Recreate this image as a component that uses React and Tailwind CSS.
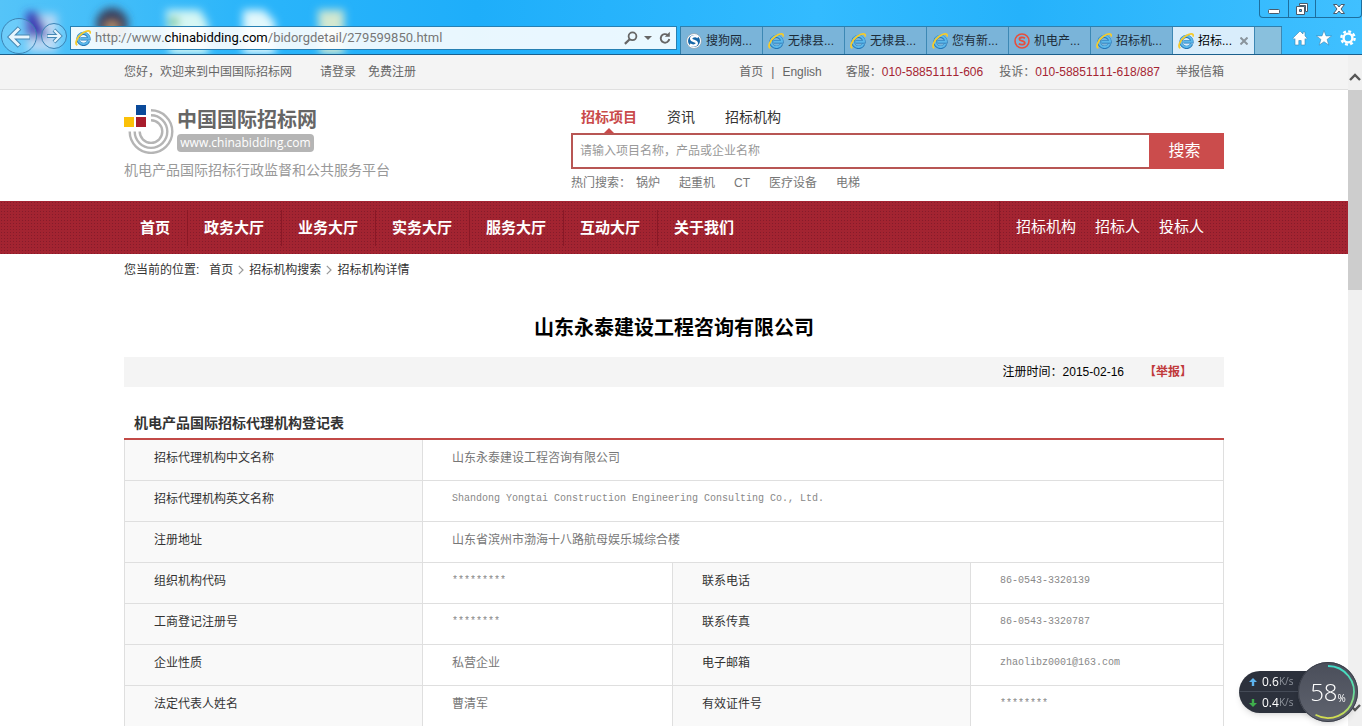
import { useState } from "react";

const tabs = [
  { icon: "sogou", label: "搜狗网..." },
  { icon: "ie", label: "无棣县..." },
  { icon: "ie", label: "无棣县..." },
  { icon: "ie", label: "您有新..." },
  { icon: "sohu", label: "机电产..." },
  { icon: "ie", label: "招标机..." },
];

const navItems = ["首页", "政务大厅", "业务大厅", "实务大厅", "服务大厅", "互动大厅", "关于我们"];
const navLinks = ["招标机构", "招标人", "投标人"];
const searchTabs = ["招标项目", "资讯", "招标机构"];
const hotWords = ["锅炉", "起重机", "CT", "医疗设备", "电梯"];

const wideRows = [
  { label: "招标代理机构中文名称", value: "山东永泰建设工程咨询有限公司" },
  { label: "招标代理机构英文名称", value: "Shandong Yongtai Construction Engineering Consulting Co., Ltd.", mono: true },
  { label: "注册地址", value: "山东省滨州市渤海十八路航母娱乐城综合楼" },
];

const pairRows = [
  [{ label: "组织机构代码", value: "*********", mono: true }, { label: "联系电话", value: "86-0543-3320139", mono: true }],
  [{ label: "工商登记注册号", value: "********", mono: true }, { label: "联系传真", value: "86-0543-3320787", mono: true }],
  [{ label: "企业性质", value: "私营企业" }, { label: "电子邮箱", value: "zhaolibz0001@163.com", mono: true }],
  [{ label: "法定代表人姓名", value: "曹清军" }, { label: "有效证件号", value: "********", mono: true }],
];

const IeIcon = () => (
  <svg viewBox="0 0 16 16" className="size-4 shrink-0" fill="none">
    <path d="M13.6 11A5.500 5.500 0 1 1 14 8.800H5.400" stroke="#2377b8" strokeWidth="3.200" />
    <path d="M13.4 11A5.500 5.500 0 1 1 14 8.800H5.400" stroke="#5cb8ea" strokeWidth="2" />
    <path d="M2.300 15.200C-1 13.400 2.600 6.600 7.400 3.300 11.400.5 15.800-.4 15.200 3.600" stroke="#f5cb2c" strokeWidth="1.800" />
  </svg>
);

const SogouIcon = () => (
  <svg viewBox="0 0 16 16" className="size-4 shrink-0" fill="none">
    <circle cx="8" cy="8" r="7.500" fill="#fff" stroke="#8aa0b0" strokeWidth=".8" />
    <circle cx="8" cy="8" r="6" fill="#1667a8" />
    <path d="M12 4.200C9.500 2.200 4.800 3.400 5.200 6 5.500 8.400 10.600 7.600 10.800 9.900 11 12.600 6.800 13.400 3.800 11.600" stroke="#fff" strokeWidth="2.400" />
  </svg>
);

const SohuIcon = () => (
  <svg viewBox="0 0 16 16" className="size-4 shrink-0" fill="none">
    <circle cx="8" cy="8" r="7" stroke="#e84e3c" strokeWidth="1.6" />
    <path d="M11 5.200C9 4 5.400 4.200 5.400 6.200 5.400 8.400 10.800 7.500 10.800 9.900 10.800 12 7 12 4.800 10.800" stroke="#e84e3c" strokeWidth="1.8" />
  </svg>
);

const TabIcon = ({ type }) => {
  if (type === "sogou") return <SogouIcon />;
  if (type === "sohu") return <SohuIcon />;
  return <IeIcon />;
};

// Desktop shortcuts seen through the glass title bar
const GlassBackground = () => (
  <svg className="absolute inset-0 size-full" aria-hidden="true">
    <defs>
      <filter id="soft" x="-50%" y="-50%" width="200%" height="200%">
        <feGaussianBlur stdDeviation="4" />
      </filter>
      <linearGradient id="sky" x1="0" x2="1">
        <stop offset="0" stopColor="#55c4f8" />
        <stop offset=".18" stopColor="#2bb5fa" />
        <stop offset=".35" stopColor="#1eaefa" />
        <stop offset=".6" stopColor="#33bbff" />
        <stop offset=".75" stopColor="#25b2fb" />
        <stop offset="1" stopColor="#40c0ff" />
      </linearGradient>
    </defs>
    <rect width="100%" height="100%" fill="url(#sky)" />
    <g filter="url(#soft)">
      <path d="M28 14H57V52H28Z" fill="#b9d9f5" />
      <path d="M26 12H37L50 38H27Z" fill="#3f3cb4" />
      <circle cx="112" cy="24" r="16" fill="#3b3f5c" />
      <ellipse cx="112" cy="27" rx="7" ry="5" fill="#c49a6a" />
      <path d="M166 10H200L208 24V54H170Z" fill="#d6f7f4" />
      <circle cx="174" cy="22" r="5" fill="#5fc08a" />
      <path d="M243 10H264L275 22V54H243Z" fill="#e2f8fc" />
      <path d="M318 10H344V54H320Z" fill="#d3e8d0" />
    </g>
  </svg>
);

const WindowButtons = () => (
  <div className="flex h-[18px] w-[103px] rounded-b border border-t-0 border-[#1d6f9f]">
    <button type="button" aria-label="最小化" className="flex w-7 items-center justify-center">
      <svg viewBox="0 0 14 14" className="size-3.5">
        <rect x="1.500" y="7.500" width="11" height="4" rx="1" fill="#fff" stroke="#4a5a6a" />
      </svg>
    </button>
    <button type="button" aria-label="还原" className="flex w-7 items-center justify-center border-x border-[#1d6f9f]">
      <svg viewBox="0 0 14 14" className="size-3.5" fill="#fff" stroke="#4a5a6a">
        <path d="M4.500 1.500h8v8h-2v-6h-6z" />
        <path fillRule="evenodd" d="M1.500 4.500h8v8h-8zM4.500 7.500h2v2h-2z" />
      </svg>
    </button>
    <button type="button" aria-label="关闭" className="flex flex-1 items-center justify-center">
      <svg viewBox="0 0 14 14" className="size-3.5">
        <path d="M1.500 2.500h3.500l2 2.500 2-2.500h3.500L9 7l3.500 4.500H9L7 9l-2 2.500H1.500L5 7z" fill="#fff" stroke="#4a5a6a" />
      </svg>
    </button>
  </div>
);

const BrowserBar = () => (
  <header className="relative h-[55px] shrink-0 border-b border-[#1b5f8c]">
    <GlassBackground />
    <div className="relative flex h-[54px] flex-col">
      <div className="flex h-[26px] items-start justify-end">
        <WindowButtons />
      </div>
      <div className="flex h-7 items-start">
        <div className="-mt-2 flex h-9 w-[70px] shrink-0 items-center">
          <button type="button" aria-label="后退" className="ml-px">
            <svg viewBox="0 0 36 36" className="size-9" fill="none">
              <circle cx="18" cy="18" r="17.500" fill="#fff" fillOpacity=".15" stroke="#3b83b4" />
              <path d="M29 19H10M18.500 10 9.500 19l9 9" stroke="#4687b3" strokeWidth="5" />
              <path d="M28.500 19H10M18 10.500 9.500 19l8.500 8.500" stroke="#e6f5fd" strokeWidth="3" />
            </svg>
          </button>
          <button type="button" aria-label="前进" className="ml-1">
            <svg viewBox="0 0 26 26" className="size-[26px]" fill="none">
              <circle cx="13" cy="13" r="12.500" fill="#fff" fillOpacity=".15" stroke="#3b83b4" />
              <path d="M6 13h13M13 7l6 6-6 6" stroke="#4687b3" strokeWidth="4" />
              <path d="M6.500 13H19M13.300 7.300 19 13l-5.700 5.700" stroke="#e6f5fd" strokeWidth="2.200" />
            </svg>
          </button>
        </div>
        <div className="flex h-6 min-w-0 flex-1 items-center border border-[#2680b3] bg-white/90 px-1">
          <IeIcon />
          <p className="ml-1 flex-1 truncate font-['Roboto',sans-serif] text-[13px] leading-5 text-[#777]">
            http://www.<span className="text-black">chinabidding.com</span>/bidorgdetail/279599850.html
          </p>
          <button type="button" aria-label="搜索">
            <svg viewBox="0 0 14 14" className="size-3.5" fill="none" stroke="#666" strokeWidth="1.800">
              <circle cx="8.500" cy="5.300" r="3.900" />
              <path d="M5.700 8.200.9 12.900" strokeWidth="2.200" />
            </svg>
          </button>
          <svg viewBox="0 0 8 4" className="ml-1.5 h-1 w-2">
            <path d="M0 0h8L4 4z" fill="#666" />
          </svg>
          <button type="button" aria-label="刷新" className="ml-1.5">
            <svg viewBox="0 0 14 14" className="size-3.5" fill="none">
              <path d="M9.800 4.100A4.300 4.300 0 1 0 11.300 8" stroke="#666" strokeWidth="1.900" />
              <path d="M6.800 5.800h5V.8z" fill="#666" />
            </svg>
          </button>
        </div>
        <div className="ml-[3px] flex h-7 shrink-0 border-l border-t border-[#2f7fac] text-xs text-[#1c2b38]">
          {tabs.map((tab, i) => (
            <button key={i} type="button" className="flex w-[82px] items-center gap-1 whitespace-nowrap border-r border-[#3d88b4] bg-[#7ab4d9] pl-[5px]">
              <TabIcon type={tab.icon} />
              {tab.label}
            </button>
          ))}
          <button type="button" className="flex w-[82px] items-center gap-1 whitespace-nowrap border-r border-[#3d88b4] bg-[#d9edfb] pl-[5px] text-black">
            <IeIcon />
            招标...
            <svg viewBox="0 0 8 8" className="ml-1 size-2" stroke="#8a949c" strokeWidth="2">
              <path d="m.5.5 7 7m0-7-7 7" />
            </svg>
          </button>
          <button type="button" aria-label="新建标签页" className="w-[27px] border-r border-[#3d88b4] bg-[#89c0dd]" />
        </div>
        <div className="flex h-6 shrink-0 items-center gap-2 pl-2.5 pr-1.5">
          <button type="button" aria-label="主页">
            <svg viewBox="0 0 16 16" className="size-4" fill="#fff" stroke="#3a86b4" strokeWidth=".6">
              <path d="M8 1 .8 8.200l1.300 1.200.9-.8V15h3.800v-4.500h2.400V15H13V8.600l.9.800 1.300-1.200-2.200-2.200V2h-2v2z" />
            </svg>
          </button>
          <button type="button" aria-label="收藏夹">
            <svg viewBox="0 0 16 16" className="size-4" fill="#fff" stroke="#3a86b4" strokeWidth=".6">
              <path d="m8 .5 2 5.400h5.600l-4.500 3.500 1.700 5.700L8 11.700l-4.800 3.400 1.700-5.700L.4 5.900H6z" />
            </svg>
          </button>
          <button type="button" aria-label="工具">
            <svg viewBox="0 0 16 16" className="size-4" fill="none">
              <circle cx="8" cy="8" r="6.600" stroke="#fff" strokeWidth="2.400" strokeDasharray="2.900 2.284" />
              <circle cx="8" cy="8" r="4.400" stroke="#fff" strokeWidth="2.400" />
            </svg>
          </button>
        </div>
      </div>
    </div>
  </header>
);

const TopBar = () => (
  <div className="border-b border-[#e0e0e0] bg-[#f4f4f4]">
    <div className="mx-auto flex h-[34px] max-w-[1100px] items-center whitespace-nowrap text-xs text-[#666]">
      <span>您好，欢迎来到中国国际招标网</span>
      <a href="#" className="ml-7">请登录</a>
      <a href="#" className="ml-3">免费注册</a>
      <div className="ml-auto flex items-center">
        <a href="#">首页</a>
        <span className="mx-2">|</span>
        <a href="#">English</a>
        <span className="ml-6">客服：</span>
        <span className="text-[#a52533]">010-58851111-606</span>
        <span className="ml-4">投诉：</span>
        <span className="text-[#a52533]">010-58851111-618/887</span>
        <a href="#" className="ml-4">举报信箱</a>
      </div>
    </div>
  </div>
);

const Logo = () => (
  <a href="#" className="block pt-[14px]">
    <div className="flex">
      <svg viewBox="0 0 50 50" className="h-[50px] w-[50px]" fill="none">
        <g stroke="#b5b5b5" strokeWidth="2.400">
          <path d="M27 6.300A21.300 21.300 0 1 1 5.700 27.600" />
          <path d="M27 11.300A16.300 16.300 0 1 1 10.700 27.600" />
          <path d="M27 16.300A11.300 11.300 0 1 1 15.700 27.600" />
        </g>
        <path d="M12 1h10v10H12z" fill="#0a4a9a" />
        <path d="M0 13h10v10H0z" fill="#fbc108" />
        <path d="M12 13h10v10H12z" fill="#a81c2c" />
      </svg>
      <div className="ml-[3px] pt-1">
        <p className="whitespace-nowrap text-xl leading-6 font-bold text-[#666]">中国国际招标网</p>
        <p className="mt-0.5 w-[137px] rounded-sm bg-[#b5b5b5] text-center font-['Open_Sans',sans-serif] text-xs leading-[18px] font-medium text-white">
          www.chinabidding.com
        </p>
      </div>
    </div>
    <p className="mt-1.5 text-sm leading-5 text-[#999]">机电产品国际招标行政监督和公共服务平台</p>
  </a>
);

const SearchBox = () => {
  const [active, setActive] = useState(0);
  const [keyword, setKeyword] = useState("");

  return (
    <form className="w-[653px] pt-4" onSubmit={(e) => e.preventDefault()}>
      <div className="flex h-[27px] gap-[30px] pl-2.5 text-sm leading-[22px] text-[#333]">
        {searchTabs.map((tab, i) => (
          <button
            key={tab}
            type="button"
            onClick={() => setActive(i)}
            className={i === active ? "flex flex-col items-center font-bold text-[#c94a4a]" : "flex flex-col items-center"}
          >
            {tab}
            {i === active && (
              <svg viewBox="0 0 10 5" className="h-[5px] w-2.5">
                <path d="M5 0l5 5H0z" fill="#c94a4a" />
              </svg>
            )}
          </button>
        ))}
      </div>
      <div className="flex h-9">
        <input
          type="text"
          aria-label="搜索关键词"
          placeholder="请输入项目名称，产品或企业名称"
          value={keyword}
          onChange={(e) => setKeyword(e.target.value)}
          className="min-w-0 flex-1 border-2 border-r-0 border-[#b85654] bg-white px-[7px] text-xs text-[#333] outline-none placeholder:text-[#999]"
        />
        <button type="submit" className="w-[75px] bg-[#cb4c4c] pr-1 text-base text-white">搜索</button>
      </div>
      <div className="mt-[5px] flex text-xs leading-[18px] text-[#777]">
        <span className="mr-[5px]">热门搜索：</span>
        <div className="flex gap-[19px]">
          {hotWords.map((word) => (
            <a key={word} href="#">{word}</a>
          ))}
        </div>
      </div>
    </form>
  );
};

const MainNav = () => (
  <nav className="bg-[#a32431] bg-[radial-gradient(#861b2a_1px,transparent_1px)] bg-[size:3px_3px]">
    <div className="mx-auto flex h-[53px] max-w-[1100px] items-center text-[15px] text-white">
      {navItems.map((item, i) => (
        <a
          key={item}
          href="#"
          className={
            i === navItems.length - 1
              ? "pl-4 font-bold leading-9"
              : "border-r border-[#8a1826] pl-4 pr-[17px] font-bold leading-9"
          }
        >
          {item}
        </a>
      ))}
      <div className="ml-auto flex h-full items-center gap-[19px] border-l border-[#8a1826] pl-4 pr-5">
        {navLinks.map((item) => (
          <a key={item} href="#">{item}</a>
        ))}
      </div>
    </div>
  </nav>
);

const Arrow = () => (
  <svg viewBox="0 0 6 10" className="mx-[5px] h-2.5 w-1.5" fill="none" stroke="#999" strokeWidth="1.200">
    <path d="m.8.8 4.200 4.200L.8 9.200" />
  </svg>
);

const LabelCell = ({ children }) => (
  <th scope="row" className="border-x border-b border-[#dfdfdf] bg-[#f9f9f9] pb-1 pl-[29px] text-left font-normal text-[#333]">
    {children}
  </th>
);

const ValueCell = ({ mono, children, ...rest }) => (
  <td
    {...rest}
    className={
      mono
        ? "border-x border-b border-[#dfdfdf] pb-1 pl-[29px] font-['Liberation_Mono',monospace] text-[10px] text-[#888]"
        : "border-x border-b border-[#dfdfdf] pb-1 pl-[29px] text-[#777]"
    }
  >
    {children}
  </td>
);

const OrgTable = () => (
  <table className="w-full table-fixed border-collapse text-xs">
    <colgroup>
      <col className="w-[298px]" />
      <col className="w-[250px]" />
      <col className="w-[298px]" />
      <col />
    </colgroup>
    <tbody>
      {wideRows.map((row) => (
        <tr key={row.label} className="h-[41px] first:h-10">
          <LabelCell>{row.label}</LabelCell>
          <ValueCell mono={row.mono} colSpan={3}>{row.value}</ValueCell>
        </tr>
      ))}
      {pairRows.map(([left, right]) => (
        <tr key={left.label} className="h-[41px]">
          <LabelCell>{left.label}</LabelCell>
          <ValueCell mono={left.mono}>{left.value}</ValueCell>
          <LabelCell>{right.label}</LabelCell>
          <ValueCell mono={right.mono}>{right.value}</ValueCell>
        </tr>
      ))}
    </tbody>
  </table>
);

const ScrollBar = () => (
  <div className="flex w-3.5 shrink-0 flex-col bg-[#f0f0f0]">
    <button type="button" aria-label="向上滚动" className="flex h-[35px] items-center justify-center pt-2">
      <svg viewBox="0 0 12 8" className="h-2 w-3" fill="none" stroke="#555" strokeWidth="2.400">
        <path d="m1 7 5-5 5 5" />
      </svg>
    </button>
    <div className="h-[200px] bg-[#cdcdcd]" />
    <button type="button" aria-label="向下滚动" className="mt-auto flex h-9 items-center justify-center">
      <svg viewBox="0 0 12 8" className="h-2 w-3" fill="none" stroke="#555" strokeWidth="2.400">
        <path d="m1 1 5 5 5-5" />
      </svg>
    </button>
  </div>
);

const Speed = ({ value, up }) => (
  <div className="flex h-[21px] items-center pl-2.5">
    <svg viewBox="0 0 8 8" className="size-2" fill={up ? "#5db4ee" : "#3fae4c"}>
      {up ? <path d="M4 0l4 4H5.200v4H2.800V4H0z" /> : <path d="M4 8 0 4h2.800V0h2.400v4H8z" />}
    </svg>
    <span className="ml-[5px] text-xs text-white">{value}</span>
    <span className="text-[10px] text-[#8f949c]">K/s</span>
  </div>
);

// Floating network/memory meter
const SpeedMeter = () => (
  <div className="fixed bottom-1 right-1 flex items-center font-['Open_Sans',sans-serif]">
    <div className="-mr-8 h-[42px] w-[91px] rounded-l-full bg-[#2c313c] shadow-md">
      <Speed value="0.6" up />
      <div className="-mt-px h-px bg-[#454b57]" />
      <Speed value="0.4" />
    </div>
    <div className="relative flex size-[60px] items-center justify-center rounded-full bg-linear-to-b from-[#4a4e5a] to-[#60646f] text-white shadow-md">
      <svg viewBox="0 0 60 60" className="absolute inset-0 size-full" fill="none">
        <defs>
          <linearGradient id="ring" x1="0" y1="0" x2="0" y2="1">
            <stop offset="0" stopColor="#3fdcc8" />
            <stop offset=".5" stopColor="#62dca0" />
            <stop offset="1" stopColor="#d5dc4e" />
          </linearGradient>
        </defs>
        <circle cx="30" cy="30" r="29.500" stroke="#3b3f49" />
        <path d="M30 4A26 26 0 1 1 17.500 52.800" stroke="url(#ring)" strokeWidth="1.800" />
      </svg>
      <span className="text-2xl font-light">58</span>
      <span className="mt-3 text-[10px]">%</span>
    </div>
  </div>
);

const App = () => {
  return (
    <div className="flex h-screen flex-col overflow-hidden bg-white font-['Liberation_Sans','Noto_Sans_CJK_SC',sans-serif] [font-kerning:none]">
      <BrowserBar />
      <div className="flex min-h-0 flex-1">
        <div className="min-w-0 flex-1 overflow-hidden">
          <TopBar />
          <div className="mx-auto flex h-[111px] max-w-[1100px] justify-between">
            <Logo />
            <SearchBox />
          </div>
          <MainNav />
          <main className="mx-auto max-w-[1100px]">
            <div className="flex h-[31px] items-center text-xs text-[#333]">
              <span className="mr-2.5">您当前的位置:</span>
              <a href="#">首页</a>
              <Arrow />
              <a href="#">招标机构搜索</a>
              <Arrow />
              <span>招标机构详情</span>
            </div>
            <h1 className="pt-7 text-center text-xl leading-[30px] font-bold text-black">山东永泰建设工程咨询有限公司</h1>
            <div className="mt-3.5 flex h-[30px] items-center justify-end bg-[#f4f4f4] pr-8 text-xs text-black">
              <span>注册时间：2015-02-16</span>
              <a href="#" className="ml-5 font-bold text-[#c0393b]">【举报】</a>
            </div>
            <h2 className="mt-[21px] border-b-2 border-[#c24a47] pl-2.5 text-sm leading-[30px] font-bold text-[#333]">
              机电产品国际招标代理机构登记表
            </h2>
            <OrgTable />
          </main>
        </div>
        <ScrollBar />
      </div>
      <SpeedMeter />
    </div>
  );
};

export default App;
